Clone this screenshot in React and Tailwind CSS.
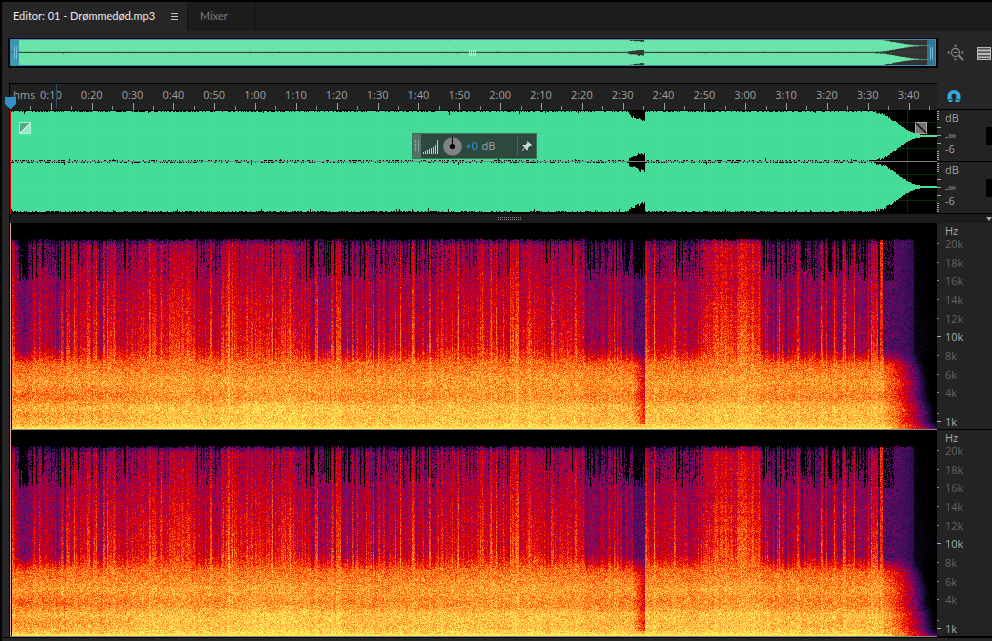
import React, { useEffect, useMemo, useRef } from 'react';

const PLOT_W = 926;

// small seeded generator so every render draws the same audio
const makeRandom = (seed) => {
    let s = seed;
    return () => {
        s = (s * 1664525 + 1013904223) % 4294967296;
        return s / 4294967296;
    };
};

const timeLabels = Array.from({ length: 22 }, (_, i) => {
    const sec = (i + 1) * 10;
    return `${Math.floor(sec / 60)}:${String(sec % 60).padStart(2, '0')}`;
});

const hzLabels = ['20k', '18k', '16k', '14k', '12k', '10k', '8k', '6k', '4k'];

// [last column, loudness of the high band, chance of a transient]
const sections = [
    [2, 0.8, 0.3],
    [57, 0.1, 0.3],
    [114, 0.52, 0.25],
    [183, 0.72, 0.3],
    [233, 0.56, 0.25],
    [298, 0.7, 0.3],
    [330, 0.36, 0.28],
    [375, 0.24, 0.36],
    [410, 0.36, 0.35],
    [480, 0.5, 0.25],
    [572, 0.57, 0.28],
    [594, 0.36, 0.32],
    [621, 0.14, 0.24],
    [633, -0.25, 0],
    [637, 0.9, 0.5],
    [691, 0.5, 0.22],
    [748, 0.92, 0.25],
    [868, 0.22, 0.32],
    [872, 0.9, 0.5],
    [926, -0.15, 0],
];

const palette = [
    [0, 0, 0, 0],
    [0.1, 12, 6, 24],
    [0.24, 52, 14, 86],
    [0.34, 100, 12, 104],
    [0.43, 150, 0, 82],
    [0.52, 196, 0, 34],
    [0.6, 226, 0, 4],
    [0.69, 255, 68, 0],
    [0.79, 255, 136, 34],
    [0.88, 255, 190, 72],
    [0.95, 255, 222, 84],
    [1, 255, 252, 84],
];

const clamp = (v, lo, hi) => Math.max(lo, Math.min(hi, v));

const colorAt = (v) => {
    const t = clamp(v, 0, 1);
    let i = 1;
    while (palette[i][0] < t) i++;
    const a = palette[i - 1];
    const b = palette[i];
    const k = (t - a[0]) / (b[0] - a[0]);
    return [1, 2, 3].map((c) => a[c] + (b[c] - a[c]) * k);
};

const lut = Array.from({ length: 256 }, (_, i) => colorAt(i / 255));

const buildColumns = (width) => {
    const rnd = makeRandom(77);
    const cols = [];
    let hold = 0;
    let spike = 0;
    let drift = 0;
    for (let x = 0; x < width; x++) {
        const sec = sections.find((s) => x < s[0]) || sections[sections.length - 1];
        if (hold > 0) hold--;
        else {
            spike = rnd() < sec[2] ? 0.2 + rnd() * 0.8 : 0;
            hold = Math.floor(rnd() * 2.4);
        }
        drift = drift * 0.85 + (rnd() - 0.5) * 0.18;
        const jitter = sec[2] ? (rnd() - 0.5) * 0.4 : 0;
        cols.push({
            level: sec[1] + (sec[2] ? spike * (1 - sec[1] * 0.72) + drift + jitter : 0),
            top: 16 + Math.floor(rnd() * 3),
            gate: 30 + Math.sqrt(rnd()) * 28,
            cut: rnd(),
        });
    }
    return cols;
};

const lowBand = (y, x) => {
    let t = 0.7 + clamp((y - 132) / 26, 0, 1) * 0.115;
    const intro = 1 - clamp((x - 100) / 30, 0, 1);
    // quieter stripe just under 4k, strongest at the start of the track
    t -= clamp(1 - Math.abs(y - 172) / 11, 0, 1) * (0.025 + intro * 0.04);
    t += clamp((y - 176) / 8, 0, 1) * (0.06 - intro * 0.02);
    t -= clamp(1 - Math.abs(y - 192) / 6, 0, 1) * intro * 0.04;
    if (x > 230 && x < 330) t += 0.02 * clamp((y - 160) / 20, 0, 1);
    if (y > 198) t += (y - 198) * 0.009;
    return t;
};

const drawSpectrogram = (canvas, seed) => {
    const { width, height } = canvas;
    const ctx = canvas.getContext('2d');
    const img = ctx.createImageData(width, height);
    const cols = buildColumns(width);
    const rnd = makeRandom(seed);

    for (let y = 0; y < height; y++) {
        const line = (rnd() - 0.5) * 0.05;
        for (let x = 0; x < width; x++) {
            const col = cols[x];
            const loud = clamp(col.level, 0, 1);
            const noise = (rnd() + rnd() - 1) * 0.15;
            let high = 0.36 + col.level * 0.24 + ((y - 75) / 60) * (0.03 + loud * 0.09);
            if (x > 691 && x < 748) {
                high += y < 110 ? line : 0;
                high += clamp((60 - y) / 40, 0, 1) * 0.04;
            }
            if (y < col.gate && col.level < 0.6) {
                const depth = (0.6 - col.level) * 1.7;
                const off = col.cut < depth * 0.75 ? 0.9 : 0.12;
                high -= rnd() < off ? 0.42 : 0.04;
            }
            if (y < col.top + 4) high -= 0.12;

            let low = lowBand(y, x) + (loud - 0.4) * 0.04;
            if (x >= 622 && x < 633) low -= ((x - 621) / 12) * 0.24 * (y > 200 ? 0.2 : 1);
            if (x >= 866) {
                const u = (x - 866) / 60;
                const reach = y > 198 ? 0.95 + (y - 198) * 0.02 : 0.8 + (y - 130) / 450;
                low -= 0.2 * u + Math.pow(clamp(u / reach, 0, 1.4), 2.2) * 0.66;
                high = 0.31 - Math.pow(u / 0.75, 3) * 0.2;
                if (x > 901) high = 0.04 + ((y - 60) / 78) * 0.05 - (u - 0.6) * 0.2;
                if (y < 58 && x < 882) high -= rnd() < 0.6 ? 0.3 : 0;
                if (x >= 868 && x < 871) high = 0.64;
            }

            const mix = clamp((y - 126 + loud * 6) / 16, 0, 1);
            const body = x >= 866 || col.level < 0 ? low : Math.max(low, high);
            let t = high * (1 - mix) + body * mix;
            t += noise * (t < 0.3 ? 0.55 : 1);
            if (y > 203 && x < 880) t = 0.96 + noise * 0.3;
            if (y < col.top) t = 0;

            const c = lut[Math.round(clamp(t, 0, 1) * 255)];
            const p = (y * width + x) * 4;
            img.data[p] = c[0];
            img.data[p + 1] = c[1];
            img.data[p + 2] = c[2];
            img.data[p + 3] = 255;
        }
    }
    ctx.putImageData(img, 0, 0);
};

const Spectrogram = ({ seed, label }) => {
    const ref = useRef(null);

    useEffect(() => {
        drawSpectrogram(ref.current, seed);
    }, [seed]);

    return (
        <div className="h-[207px] border-b border-[#8a8a8a] border-l border-l-[#e8a9a4] bg-black pl-px">
            <canvas
                ref={ref}
                width={925}
                height={206}
                role="img"
                aria-label={label}
                className="block h-[206px] w-full [image-rendering:pixelated]"
            />
        </div>
    );
};

// fade out at the end of the track, [x, amplitude]
const fade = [
    [864, 1],
    [872, 0.93],
    [880, 0.72],
    [890, 0.42],
    [898, 0.2],
    [905, 0.08],
    [913, 0.03],
    [926, 0.02],
];

const fadeAt = (x) => {
    if (x <= fade[0][0]) return 1;
    const i = Math.max(1, fade.findIndex((f) => f[0] >= x));
    const [x0, a0] = fade[i - 1];
    const [x1, a1] = fade[i];
    return a0 + ((a1 - a0) * (x - x0)) / (x1 - x0);
};

const channelPath = (center, half, dipTop, dipBottom, seed) => {
    const rnd = makeRandom(seed);
    const top = [];
    const bottom = [];
    for (let x = 0; x < PLOT_W; x++) {
        const a = fadeAt(x);
        let up = a * half;
        let down = a * half;
        if (x > 864 && x < 906) {
            up -= rnd() * 3 * a;
            down -= rnd() * 3 * a;
        } else if (x >= 618 && x < 634) {
            const k = (x - 617) / 16;
            up -= half * dipTop * (0.3 + k * 0.7) * (0.6 + rnd() * 0.4);
            down -= half * dipBottom * (0.3 + k * 0.7) * (0.6 + rnd() * 0.4);
        } else if (a === 1) {
            up -= rnd() < 0.4 ? 1 : 0;
            down -= rnd() < 0.4 ? 1 : 0;
            if (rnd() < 0.012) up -= 1 + rnd() * 2;
            if (rnd() < 0.012) down -= 1 + rnd() * 2;
        }
        up = Math.max(0.5, Math.round(up));
        down = Math.max(0.5, Math.round(down));
        top.push(`L${x} ${center - up}L${x + 1} ${center - up}`);
        bottom.unshift(`L${x + 1} ${center + down}L${x} ${center + down}`);
    }
    return `M0 ${center}${top.join('')}${bottom.join('')}Z`;
};

const Waveform = () => {
    const left = useMemo(() => channelPath(26, 25, 0.6, 0.42, 5), []);
    const right = useMemo(() => channelPath(77, 25, 0.48, 0.48, 9), []);

    return (
        <svg
            viewBox="0 0 926 103"
            preserveAspectRatio="none"
            shapeRendering="crispEdges"
            className="block h-[103px] w-full"
            role="img"
            aria-label="Waveform"
        >
            <rect width="926" height="103" fill="#000" />
            <g fill="#003300">
                <rect x="840" y="12" width="86" height="1" />
                <rect x="840" y="38" width="86" height="1" />
                <rect x="840" y="64" width="86" height="1" />
                <rect x="840" y="90" width="86" height="1" />
                <rect x="896" width="1" height="103" />
            </g>
            <path d={left} fill="#45db99" />
            <path d={right} fill="#45db99" />
            <g fill="#4ce09a">
                {timeLabels.slice(0, 21).map((t, i) => (
                    <rect key={t} x={Math.round(40 + i * 40.8)} y="3" width="1" height="97" opacity="0.5" />
                ))}
                <rect y="25" width="926" height="1" />
                <rect y="77" width="926" height="1" />
            </g>
            <rect y="51" width="926" height="1" fill="#808080" />
        </svg>
    );
};

const Overview = () => {
    const left = useMemo(() => channelPath(26, 25, 0.6, 0.5, 5), []);
    const right = useMemo(() => channelPath(77, 25, 0.6, 0.5, 9), []);

    return (
        <svg
            viewBox="0 0 926 103"
            preserveAspectRatio="none"
            className="block h-full w-full"
            role="img"
            aria-label="Overview waveform"
        >
            <rect width="926" height="103" fill="#333333" />
            <path d={left} fill="#6be4ac" />
            <path d={right} fill="#6be4ac" />
            <rect y="49" width="926" height="4" fill="#3c3c3c" />
        </svg>
    );
};

const RangeHandle = ({ label }) => (
    <button aria-label={label} className="flex h-full w-2 items-center justify-center gap-px bg-[#2e86ab]/80">
        <span className="h-3 w-px bg-[#7cbcd6]" />
        <span className="h-3 w-px bg-[#7cbcd6]" />
    </button>
);

const TimeRuler = () => (
    <div className="relative flex h-[27px] border-t border-black bg-[#212121] text-[11px] leading-4 text-[#a0a0a0]">
        <div className="grow-5 basis-0 min-w-0 pt-[3px]">
            <span className="ml-[3px]">hms</span>
        </div>
        {timeLabels.map((t) => (
            <div key={t} className="grow-10 basis-0 min-w-0 pt-[3px] text-center">
                {t}
                <div className="flex h-[7px] items-end justify-between">
                    <span className="h-1 w-px bg-[#8c8c8c]" />
                    <span className="h-[7px] w-px bg-[#a0a0a0]" />
                    <span />
                </div>
            </div>
        ))}
        <div className="flex grow-2 basis-0 min-w-0 items-end">
            <span className="h-1 w-px bg-[#8c8c8c]" />
        </div>
        <span className="absolute left-[46px] top-0 h-6 w-px bg-[#24506b]" />
        <svg width="12" height="13" viewBox="0 0 12 13" className="absolute -left-[5px] bottom-0" aria-hidden="true">
            <path d="M0 0h11v7l-5 5h-1L0 7z" fill="#3492c9" />
        </svg>
    </div>
);

const MinorTicks = () => (
    <div className="flex flex-col gap-px">
        {[0, 1, 2, 3, 4].map((i) => (
            <span key={i} className="h-px w-[2px] bg-[#a0a0a0]" />
        ))}
    </div>
);

const DbScale = () => (
    <div className="flex h-[52px] border-b border-black bg-[#232323] text-[11px] leading-none text-[#a0a0a0]">
        <div className="flex w-2 flex-col justify-between py-px">
            <MinorTicks />
            <span className="h-px w-1 bg-[#a0a0a0]" />
            <span className="h-px w-1 bg-[#a0a0a0]" />
            <span className="h-px w-1 bg-[#a0a0a0]" />
            <MinorTicks />
        </div>
        <div className="flex grow flex-col">
            <span className="flex h-[15px] items-center">dB</span>
            <span className="flex h-5 items-center">-∞</span>
            <span className="flex h-[7px] items-center">-6</span>
        </div>
        <span className="mt-[17px] h-[18px] w-[6px] bg-black" />
    </div>
);

const HzRow = ({ text, className, major }) => (
    <div className={`flex items-center ${className}`}>
        <span className={major ? 'h-px w-1 bg-[#b0b0b0]' : 'h-px w-[2px] bg-[#909090]'} />
        <span className={major ? 'ml-1 text-[#a8a8a8]' : 'ml-[6px] text-[#626262]'}>{text}</span>
    </div>
);

const HzScale = () => (
    <div className="flex h-[207px] flex-col border-b border-black bg-[#232323] text-[11px] leading-none text-[#626262]">
        <span className="flex h-[11px] items-center pl-2 pt-1 text-[#a8a8a8]">Hz</span>
        <div className="flex h-[168px] flex-col">
            {hzLabels.map((hz) => (
                <HzRow key={hz} text={hz} major={hz === '10k'} className="flex-1" />
            ))}
        </div>
        <span className="flex h-3 items-end">
            <span className="h-px w-[2px] bg-[#909090]" />
        </span>
        <HzRow text="1k" major className="h-[14px]" />
    </div>
);

const FadeHandle = ({ label, out }) => (
    <button aria-label={label}>
        <svg width="12" height="12" viewBox="0 0 12 12">
            {out ? (
                <>
                    <rect x="0.5" y="0.5" width="11" height="11" fill="#747474" stroke="#a8a8a8" />
                    <path d="M1 1l10 10" stroke="#111" strokeWidth="1.5" />
                </>
            ) : (
                <>
                    <rect x="0.5" y="0.5" width="11" height="11" fill="#4fa982" stroke="#b4f0d6" />
                    <path d="M1 11L11 1v10z" fill="#9be8c6" />
                    <path d="M1 11L11 1" stroke="#e6fff5" />
                </>
            )}
        </svg>
    </button>
);

const GainHud = () => (
    <div className="flex h-[26px] w-[125px] items-center border border-[#37745a] bg-[#2d493d] text-[11px] text-[#a0a0a0]">
        <span className="flex h-full w-2 items-center justify-center bg-[#587067]">
            <svg width="4" height="12" viewBox="0 0 4 12" aria-hidden="true">
                <path d="M.5 0v12M3.5 0v12" stroke="#b5c2bc" strokeDasharray="1 1" />
            </svg>
        </span>
        <svg width="16" height="15" viewBox="0 0 16 15" className="ml-[2px]" aria-hidden="true">
            <path
                d="M.5 15v-2M2.5 15v-3M4.5 15v-4M6.5 15v-5M8.5 15v-6M10.5 15v-7M12.5 15V6M14.5 15V1"
                stroke="#c4ccc8"
                shapeRendering="crispEdges"
            />
        </svg>
        <button aria-label="Gain knob" className="ml-1">
            <svg width="19" height="19" viewBox="0 0 19 19">
                <circle cx="9.5" cy="9.5" r="9.3" fill="#828282" />
                <path d="M9.5 0v9" stroke="#0c0c0c" />
                <circle cx="9.5" cy="9.5" r="2.6" fill="#050505" />
            </svg>
        </button>
        <label htmlFor="gain" className="sr-only">
            Gain
        </label>
        <input id="gain" defaultValue="+0" className="ml-1 w-4 bg-transparent text-[#3a97cf] outline-none" />
        <span>dB</span>
        <span className="ml-auto h-5 w-px bg-[#466558]" />
        <button aria-label="Pin" className="px-1">
            <svg width="10" height="10" viewBox="0 0 10 10">
                <path d="M5 0l5 4-1 1-1-.2-2 2V9L5 9.500 3 7 .6 10 0 9.400 2.500 6.500.5 4.500 1 4h2.500l2-2L5 1z" fill="#cfd6d2" />
            </svg>
        </button>
    </div>
);

const App = () => {
    return (
        <div className="min-h-screen border-l-2 border-t-2 border-black bg-[#262626] font-['Open_Sans','Noto_Sans',sans-serif]">
            <div role="tablist" className="flex h-[29px] bg-[#1c1c1c] font-['Lato','Open_Sans',sans-serif] text-[11px]">
                <div className="flex w-[185px] items-center bg-[#262626] pl-[11px]">
                    <button role="tab" aria-selected="true" className="whitespace-nowrap text-[#ececec]">
                        Editor: 01 - Drømmedød.mp3
                    </button>
                    <button aria-label="Panel menu" className="ml-auto mr-2">
                        <svg width="9" height="9" viewBox="0 0 9 9" shapeRendering="crispEdges">
                            <path d="M1 1.500h7M1 4.500h7M1 7.500h7" stroke="#c8c8c8" />
                        </svg>
                    </button>
                </div>
                <button
                    role="tab"
                    aria-selected="false"
                    className="w-[69px] border-x border-[#151515] pl-3 text-left text-[#7c7c7c]"
                >
                    Mixer
                </button>
            </div>

            <div className="mt-[7px] flex items-center pl-[6px]">
                <div className="relative h-[30px] grow border-2 border-t border-black">
                    <Overview />
                    <div className="absolute inset-0 flex items-center justify-between border border-[#3a8fb5]">
                        <RangeHandle label="Range start" />
                        <svg width="8" height="6" viewBox="0 0 8 6" aria-hidden="true">
                            <path d="M.5 0v6M2.500 0v6M4.500 0v6M6.500 0v6" stroke="#c4f5de" />
                        </svg>
                        <RangeHandle label="Range end" />
                    </div>
                </div>
                <div className="flex w-[54px] items-center justify-between pl-[9px]">
                    <button aria-label="Zoom out full">
                        <svg width="18" height="18" viewBox="0 0 18 18" fill="none">
                            <circle cx="8.500" cy="8.500" r="4" stroke="#808080" strokeWidth="1.300" />
                            <path d="M6.500 8.500h4" stroke="#909090" />
                            <path d="M11.500 11.500l4.500 4.500" stroke="#808080" strokeWidth="2" />
                            <path d="M8.500 0l2 2.500h-4zM8.500 17l2-2.500h-4zM0 8.500l2.500-2v4zM17 8.500l-2.500-2v4z" fill="#757575" />
                        </svg>
                    </button>
                    <button aria-label="Show list" className="mr-px">
                        <svg width="14" height="13" viewBox="0 0 14 13" shapeRendering="crispEdges">
                            <rect width="14" height="13" fill="#b8b8b8" />
                            <path d="M1 1.500h12M1 5.500h12M1 8.500h12M1 11.500h12" stroke="#505050" />
                            <path d="M1 2.500h12M1 4.500h12M1 9.500h12" stroke="#808080" />
                        </svg>
                    </button>
                </div>
            </div>

            <div className="ml-[7px] mt-[15px] grid grid-cols-[1fr_55px] border-l border-black">
                <TimeRuler />
                <div className="flex items-center border-b border-black pl-[10px]">
                    <button aria-label="Toggle snapping">
                        <svg width="14" height="13" viewBox="0 0 14 13">
                            <path
                                d="M2 12L.5 9V6a6.500 6 0 0 1 13 0v3L12 12H8.500V8.500l1-1V6a2.500 2.500 0 0 0-5 0v1.500l1 1V12z"
                                fill="#35a8e0"
                            />
                            <path d="M1.500 9.500h4M8.500 9.500h4" stroke="#1c4258" />
                        </svg>
                    </button>
                </div>

                <div className="relative h-[104px] border-b border-b-black border-l border-l-[#e00000] bg-black">
                    <Waveform />
                    <div className="absolute inset-x-2 top-3 flex items-start justify-between pr-[2px]">
                        <FadeHandle label="Fade in" />
                        <FadeHandle label="Fade out" out />
                    </div>
                    <div className="absolute inset-x-0 top-[23px] flex justify-center">
                        <GainHud />
                    </div>
                </div>
                <div>
                    <DbScale />
                    <DbScale />
                </div>

                <div className="flex h-[9px] items-center justify-center bg-[#1b1b1b] pl-[72px]">
                    <svg width="24" height="4" viewBox="0 0 24 4" aria-hidden="true" shapeRendering="crispEdges">
                        <path d="M0 .5h24M0 2.500h24" stroke="#8a8a8a" strokeDasharray="1 1" />
                    </svg>
                </div>
                <div className="flex h-[9px] items-center justify-end bg-[#1b1b1b]">
                    <svg width="6" height="4" viewBox="0 0 6 4" aria-hidden="true">
                        <path d="M0 0h6L3 4z" fill="#a8a8a8" />
                    </svg>
                </div>

                <Spectrogram seed={21} label="Spectrogram, left channel" />
                <HzScale />
                <Spectrogram seed={408} label="Spectrogram, right channel" />
                <HzScale />
            </div>
            <div className="border-t border-black" />
        </div>
    );
};

export default App;
